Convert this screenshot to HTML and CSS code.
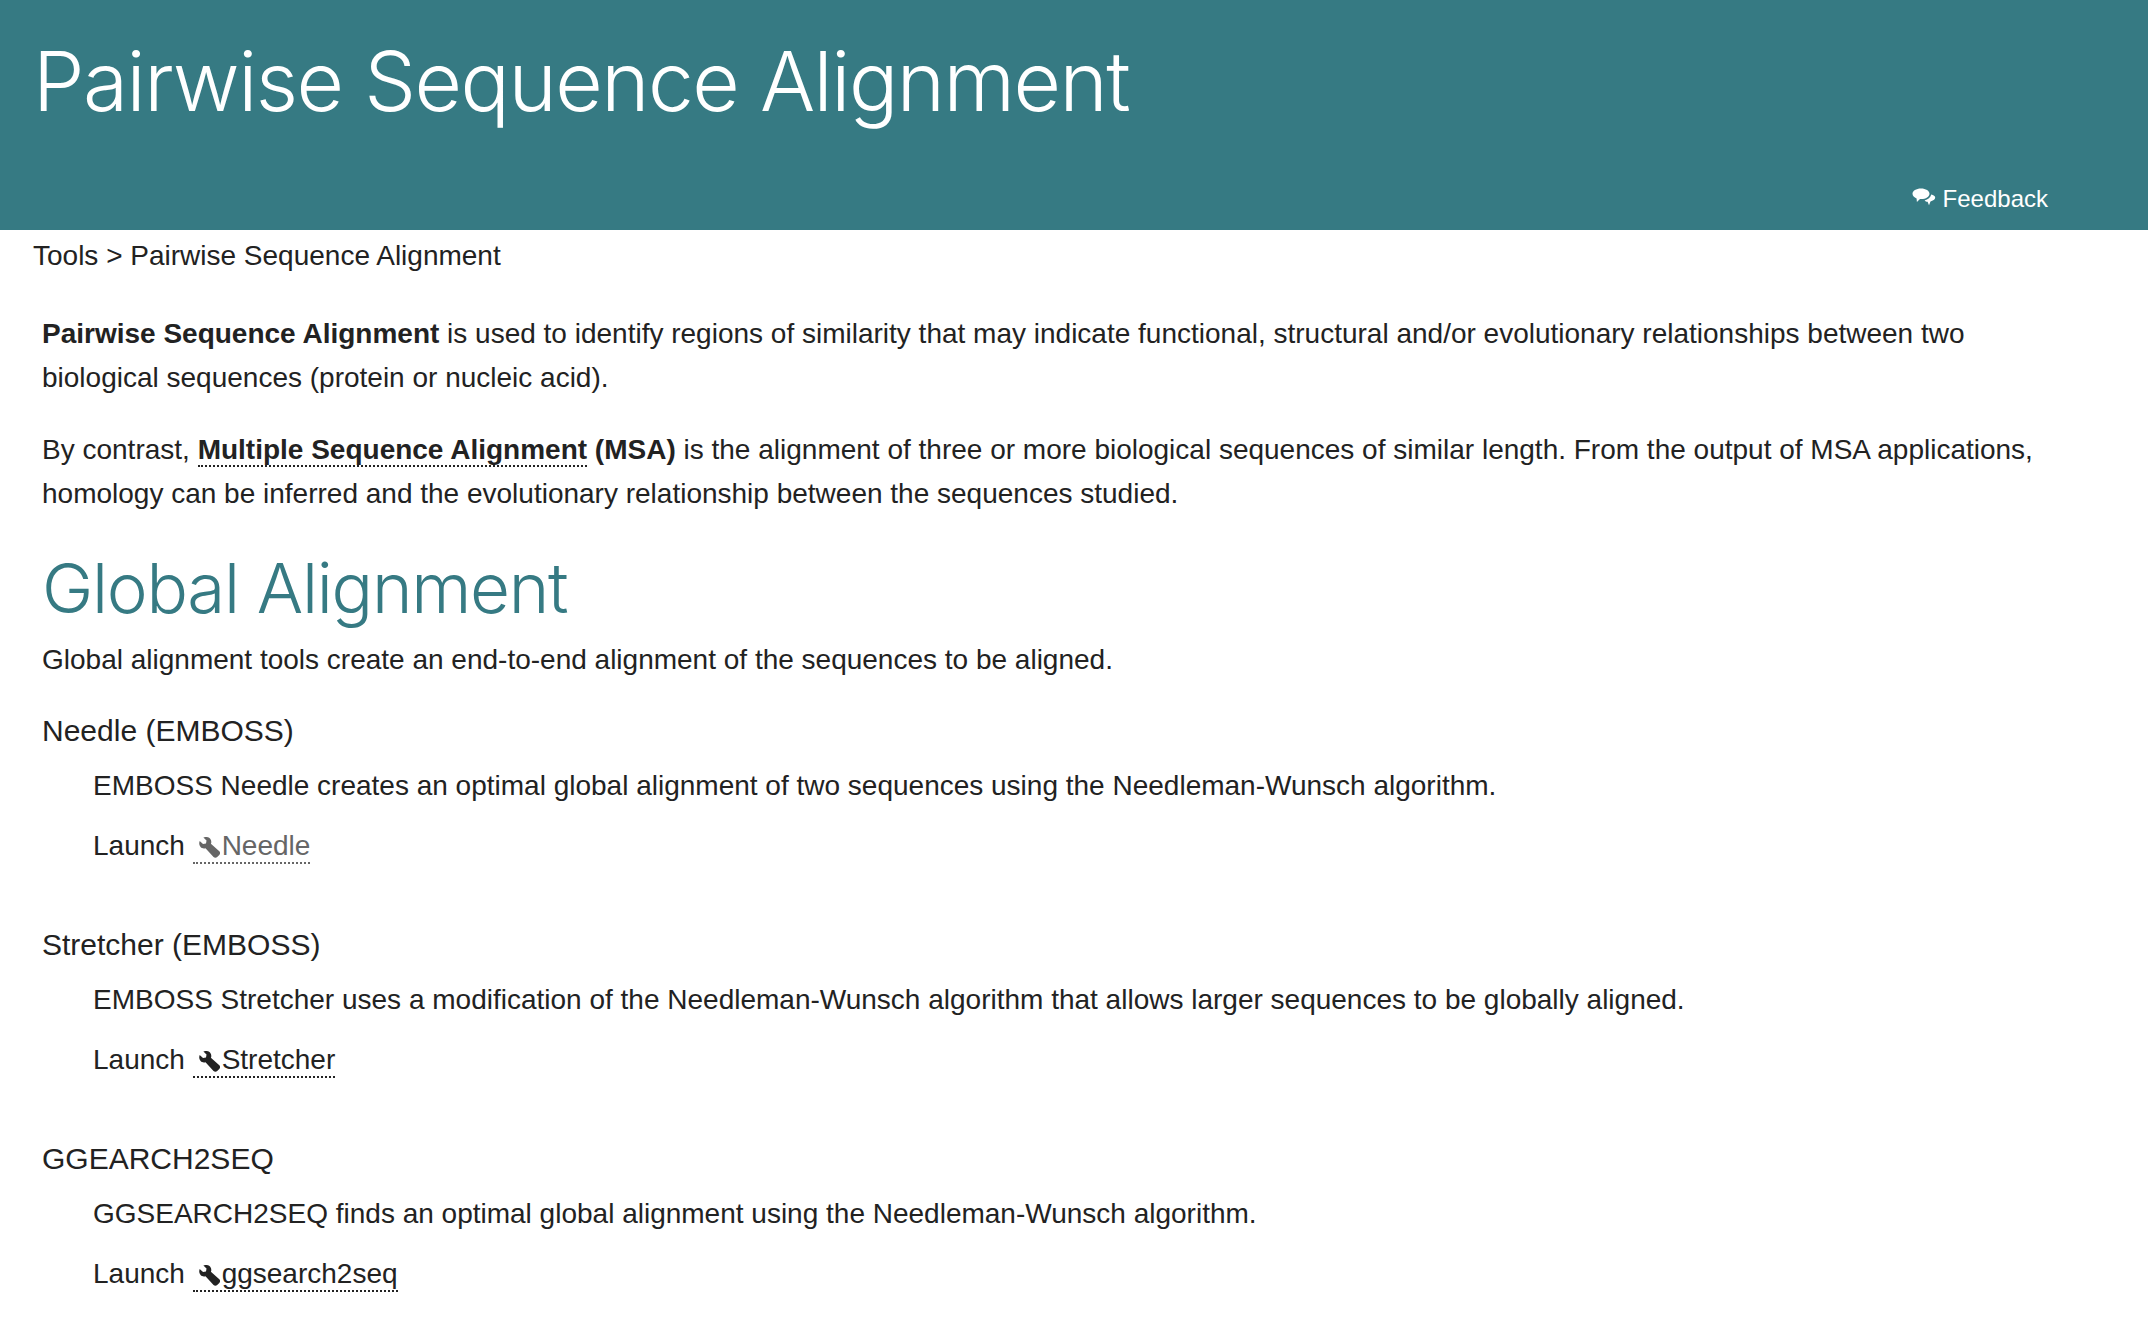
FILE: index.html
```html
<!DOCTYPE html>
<html lang="en">
<head>
    <meta charset="UTF-8">
    <meta name="viewport" content="width=device-width, initial-scale=1.0">
    <title>Pairwise Sequence Alignment</title>
    <link rel="stylesheet" href="styles.css">
</head>
<body>
    <!-- Masthead -->
    <header class="masthead">
        <h1 class="masthead-title">Pairwise Sequence Alignment</h1>
        <nav class="masthead-nav">
            <a class="feedback-link" href="#">
                <svg class="feedback-icon" viewBox="0 0 24 18" aria-hidden="true">
                    <path d="M9 0.5C4.2 0.5 0.5 2.9 0.5 5.8 0.5 7.8 2.2 9.5 4.6 10.4L4.9 14 8 11.1C8.4 11.1 8.8 11.1 9.2 11.1 13.8 11.1 17.5 8.7 17.5 5.8 17.5 2.9 13.8 0.5 9 0.5Z"/>
                    <path d="M19.2 6.6C18.7 9.6 15.9 11.7 12.6 12.4 13.3 13.2 14.4 13.7 15.6 13.8L17 17.2 18.5 13.4C20.8 13 23.2 11.7 23.2 9.6 23.2 8.2 21.6 7 19.2 6.6Z"/>
                </svg>
                Feedback
            </a>
        </nav>
    </header>

    <!-- Breadcrumb -->
    <div class="breadcrumb">Tools &gt; Pairwise Sequence Alignment</div>

    <main class="content">
        <p><strong>Pairwise Sequence Alignment</strong> is used to identify regions of similarity that may indicate functional, structural and/or evolutionary relationships between two biological sequences (protein or nucleic acid).</p>
        <p>By contrast, <strong><a class="term" href="#">Multiple Sequence Alignment</a> (MSA)</strong> is the alignment of three or more biological sequences of similar length. From the output of MSA applications, homology can be inferred and the evolutionary relationship between the sequences studied.</p>

        <h2 class="section-title">Global Alignment</h2>
        <p class="section-intro">Global alignment tools create an end-to-end alignment of the sequences to be aligned.</p>

        <dl class="tools">
            <dt>Needle (EMBOSS)</dt>
            <dd>
                <p>EMBOSS Needle creates an optimal global alignment of two sequences using the Needleman-Wunsch algorithm.</p>
                <p>Launch <a class="launch launch-visited" href="#"><svg class="wrench" viewBox="0 0 24 24" aria-hidden="true"><path d="M0.8 4.5 4.6 8 8 7.4 8.6 4 5 0.6C7.8-0.6 11-0.2 12.8 2 14.2 3.8 14.4 6 13.6 7.8L23.2 16.4C24.4 17.6 24.4 19.4 23.2 20.6L20.8 22.8C19.6 24 17.8 24 16.6 22.8L7.4 12.8C5.4 13.4 3.2 13 1.8 11.4 0.2 9.6-0.2 7 0.8 4.5Z"/></svg>Needle</a></p>
            </dd>

            <dt>Stretcher (EMBOSS)</dt>
            <dd>
                <p>EMBOSS Stretcher uses a modification of the Needleman-Wunsch algorithm that allows larger sequences to be globally aligned.</p>
                <p>Launch <a class="launch" href="#"><svg class="wrench" viewBox="0 0 24 24" aria-hidden="true"><path d="M0.8 4.5 4.6 8 8 7.4 8.6 4 5 0.6C7.8-0.6 11-0.2 12.8 2 14.2 3.8 14.4 6 13.6 7.8L23.2 16.4C24.4 17.6 24.4 19.4 23.2 20.6L20.8 22.8C19.6 24 17.8 24 16.6 22.8L7.4 12.8C5.4 13.4 3.2 13 1.8 11.4 0.2 9.6-0.2 7 0.8 4.5Z"/></svg>Stretcher</a></p>
            </dd>

            <dt>GGEARCH2SEQ</dt>
            <dd>
                <p>GGSEARCH2SEQ finds an optimal global alignment using the Needleman-Wunsch algorithm.</p>
                <p>Launch <a class="launch" href="#"><svg class="wrench" viewBox="0 0 24 24" aria-hidden="true"><path d="M0.8 4.5 4.6 8 8 7.4 8.6 4 5 0.6C7.8-0.6 11-0.2 12.8 2 14.2 3.8 14.4 6 13.6 7.8L23.2 16.4C24.4 17.6 24.4 19.4 23.2 20.6L20.8 22.8C19.6 24 17.8 24 16.6 22.8L7.4 12.8C5.4 13.4 3.2 13 1.8 11.4 0.2 9.6-0.2 7 0.8 4.5Z"/></svg>ggsearch2seq</a></p>
            </dd>
        </dl>
    </main>
</body>
</html>
```

FILE: styles.css
```css
/* Base */
body {
    margin: 0;
    background-color: #fff;
    color: #222;
    font-family: "Liberation Sans", Arial, sans-serif;
    font-size: 28px;
    line-height: 44px;
}

a {
    color: inherit;
    text-decoration: none;
}

p {
    margin: 0;
}

/* Masthead */
.masthead {
    height: 230px;
    box-sizing: border-box;
    display: flex;
    flex-direction: column;
    justify-content: space-between;
    padding: 0 100px 16px 33px;
    background-color: #367a83;
    color: #fff;
}

.masthead-title {
    margin: 0;
    padding-top: 34px;
    font-family: Inter, "Liberation Sans", sans-serif;
    font-size: 82px;
    font-weight: 300;
    letter-spacing: -1.5px;
    line-height: 96px;
}

.masthead-nav {
    display: flex;
    justify-content: flex-end;
    font-size: 24px;
    line-height: 30px;
}

.feedback-link {
    display: flex;
    align-items: center;
    gap: 7px;
}

.feedback-icon {
    width: 24px;
    height: 18px;
    margin-top: -4px;
    fill: #fff;
}

/* Breadcrumb */
.breadcrumb {
    padding: 4px 33px 0;
}

/* Content */
.content {
    padding: 34px 72px 0 42px;
}

.content > p + p {
    margin-top: 28px;
}

.term {
    border-bottom: 2px dotted #222;
}

.section-title {
    margin: 22px 0 0;
    color: #367a83;
    font-family: Inter, "Liberation Sans", sans-serif;
    font-size: 69px;
    font-weight: 300;
    letter-spacing: -1.3px;
    line-height: 100px;
}

.content > .section-intro {
    margin-top: 0;
}

/* Tools list */
.tools {
    margin: 27px 0 0;
}

.tools dt {
    font-size: 30px;
    line-height: 44px;
}

.tools dd {
    margin: 11px 0 55px 51px;
}

.tools dd p + p {
    margin-top: 16px;
}

.launch {
    border-bottom: 2px dotted #222;
    padding-bottom: 1px;
}

.launch-visited {
    color: #666;
    border-bottom-color: #666;
}

.wrench {
    width: 21px;
    height: 21px;
    margin: 0 2px 0 6px;
    vertical-align: -3px;
    fill: currentColor;
}
```
